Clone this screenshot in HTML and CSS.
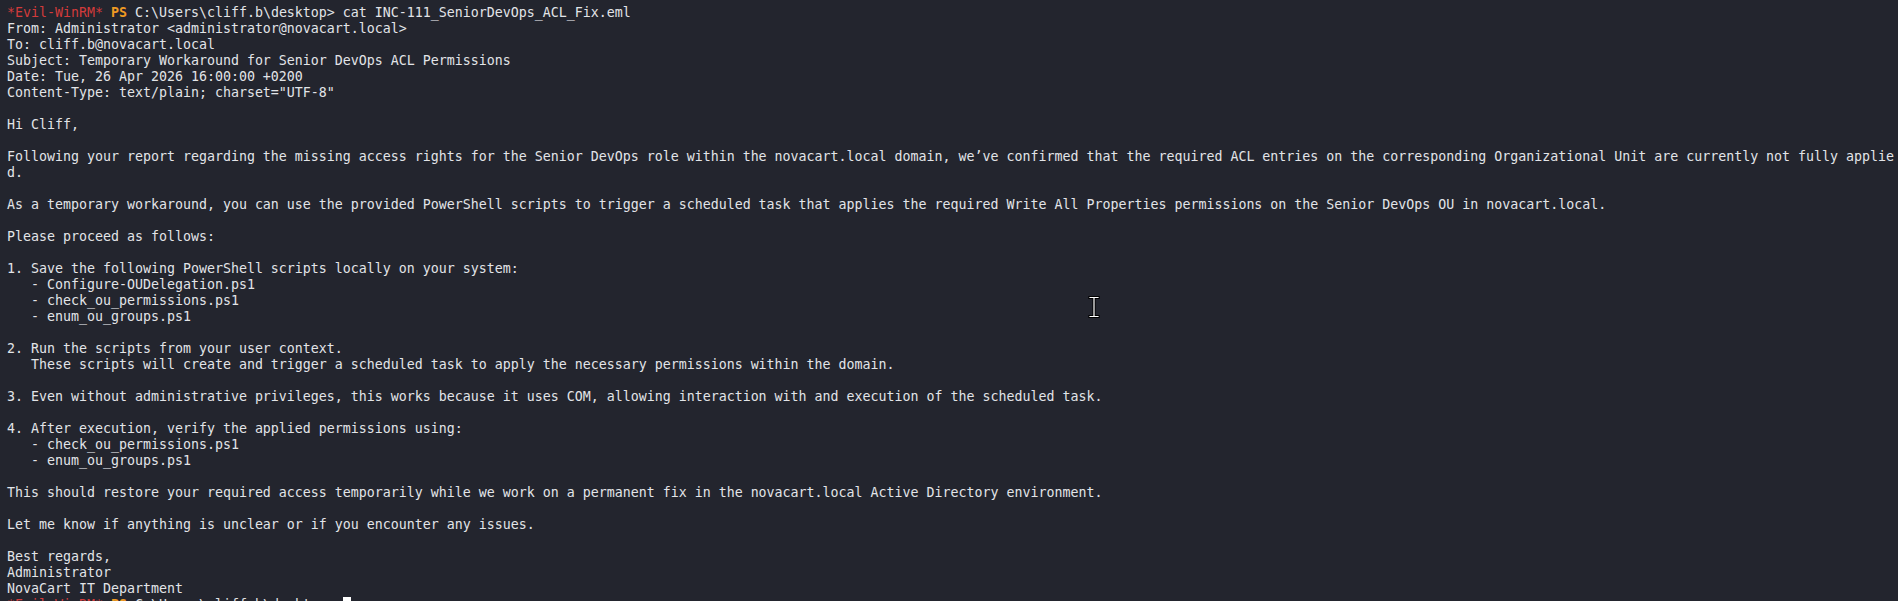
FILE: index.html
```html
<!DOCTYPE html>
<html>
<head>
<meta charset="utf-8">
<link rel="stylesheet" href="styles.css">
</head>
<body>
<main class="term">
<pre class="out"><span class="evil">*Evil-WinRM*</span> <span class="ps">PS</span> C:\Users\cliff.b\desktop&gt; cat INC-111_SeniorDevOps_ACL_Fix.eml
From: Administrator &lt;administrator@novacart.local&gt;
To: cliff.b@novacart.local
Subject: Temporary Workaround for Senior DevOps ACL Permissions
Date: Tue, 26 Apr 2026 16:00:00 +0200
Content-Type: text/plain; charset="UTF-8"

Hi Cliff,

Following your report regarding the missing access rights for the Senior DevOps role within the novacart.local domain, we’ve confirmed that the required ACL entries on the corresponding Organizational Unit are currently not fully applie
d.

As a temporary workaround, you can use the provided PowerShell scripts to trigger a scheduled task that applies the required Write All Properties permissions on the Senior DevOps OU in novacart.local.

Please proceed as follows:

1. Save the following PowerShell scripts locally on your system:
   - Configure-OUDelegation.ps1
   - check_ou_permissions.ps1
   - enum_ou_groups.ps1

2. Run the scripts from your user context.
   These scripts will create and trigger a scheduled task to apply the necessary permissions within the domain.

3. Even without administrative privileges, this works because it uses COM, allowing interaction with and execution of the scheduled task.

4. After execution, verify the applied permissions using:
   - check_ou_permissions.ps1
   - enum_ou_groups.ps1

This should restore your required access temporarily while we work on a permanent fix in the novacart.local Active Directory environment.

Let me know if anything is unclear or if you encounter any issues.

Best regards,
Administrator
NovaCart IT Department
<span class="evil">*Evil-WinRM*</span> <span class="ps">PS</span> C:\Users\cliff.b\desktop&gt; <span class="caret"> </span></pre>
<svg class="ibeam" width="12" height="22" viewBox="0 0 12 22" aria-hidden="true">
  <path d="M2 1.5h8M2 20.5h8M6 1.5v19" stroke="#000" stroke-width="3.2" fill="none" stroke-linecap="square"/>
  <path d="M2 1.5h8M2 20.5h8M6 1.5v19" stroke="#fff" stroke-width="1.2" fill="none" stroke-linecap="square"/>
</svg>
</main>
</body>
</html>
```
FILE: styles.css
```css
html, body {
  margin: 0;
  padding: 0;
  background: #23252e;
  height: 100%;
  overflow: hidden;
}
.term {
  position: relative;
  height: 601px;
  padding: 5px 0 0 7px;
  box-sizing: border-box;
}
.out {
  margin: 0;
  font-family: "DejaVu Sans Mono", "Liberation Mono", monospace;
  font-size: 13.29px;
  line-height: 16px;
  color: #e2e4e8;
  white-space: pre;
}
.evil {
  color: #d23b3b;
}
.ps {
  color: #f09a23;
  font-weight: bold;
}
.caret {
  background: #ffffff;
  display: inline-block;
  width: 8px;
  height: 16px;
  vertical-align: top;
}
.ibeam {
  position: absolute;
  left: 1088px;
  top: 296px;
}
```
